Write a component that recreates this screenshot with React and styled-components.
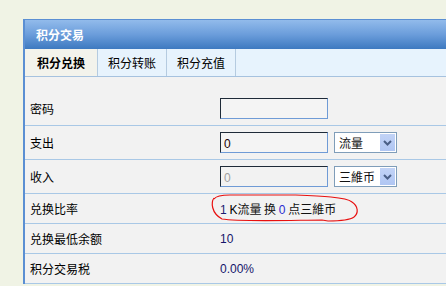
import React from "react";
import styled, { createGlobalStyle } from "styled-components";

const Global = createGlobalStyle`
  html, body { margin: 0; padding: 0; background: #f0f3e5; overflow: hidden; }
  body { font-family: "Noto Sans CJK SC", "Noto Sans", sans-serif; font-size: 12px; color: #000; }
`;

const Page = styled.div`
  padding: 19px 0 0 23px;
  width: 446px;
  height: 286px;
  box-sizing: border-box;
`;

const Panel = styled.div`
  width: 440px;
  border-left: 2px solid #5b8fd3;
  border-top: 1px solid #5b8fd3;
  background: #f2f2f2;
`;

const Header = styled.div`
  height: 29px;
  display: flex;
  align-items: center;
  padding-left: 11px;
  background: linear-gradient(#92bbeb, #6b9ddb 50%, #3d79c0);
  color: #fff;
  font-weight: bold;
  font-size: 12px;
`;

const Tabs = styled.div`
  display: flex;
  height: 27px;
  background: #e7f3fd;
  border-bottom: 1px solid #a6c2df;
`;

const Tab = styled.div`
  width: ${(p) => p.$w}px;
  display: flex;
  align-items: center;
  justify-content: center;
  box-sizing: border-box;
  border-right: 1px solid #b5cbe0;
  background: ${(p) => (p.$active ? "#f3f3ec" : "transparent")};
  font-weight: ${(p) => (p.$active ? "bold" : "normal")};
  font-size: 12px;
`;

const Body = styled.div`
  padding-top: 14px;
`;

const Row = styled.div`
  display: grid;
  grid-template-columns: 190px 1fr;
  align-items: center;
  height: ${(p) => p.$h}px;
  padding-left: 5px;
  border-bottom: 1px solid #a9c8e6;
  box-sizing: border-box;
`;

const Label = styled.div`
  font-size: 12px;
`;

const Value = styled.div`
  position: relative;
  display: flex;
  align-items: center;
  gap: 6px;
  font-size: 12px;
  color: #111;
`;

const Input = styled.input`
  width: 108px;
  height: 21px;
  box-sizing: border-box;
  margin: 0;
  padding: 2px 3px 0;
  font: 12px "Liberation Sans", Arial, sans-serif;
  color: ${(p) => (p.disabled ? "#a0a0a0" : "#200")};
  background: ${(p) => (p.disabled ? "#f2f2f2" : "#f4f4f4")};
  border-style: solid;
  border-width: 1px;
  border-color: #1e2a38 #6f9bd6 #6f9bd6 #1e2a38;
  outline: none;
`;

const Select = styled.div`
  width: 63px;
  height: 21px;
  box-sizing: border-box;
  border: 1px solid #7f9db9;
  background: #fff;
  display: flex;
  align-items: center;
  justify-content: space-between;
  padding: 1px 1px 1px 4px;
  font-size: 12px;
`;

const Arrow = styled.div`
  width: 15px;
  height: 17px;
  background: linear-gradient(#c2d3f6, #b0c6f3);
  display: flex;
  align-items: center;
  justify-content: center;
`;

const Num = styled.span`
  font-family: "Liberation Sans", Arial, sans-serif;
  color: ${(p) => p.$c || "#15156a"};
`;

const Mark = styled.svg`
  position: absolute;
  left: -10px;
  top: -6px;
  pointer-events: none;
`;

function Dropdown({ label }) {
  return (
    <Select>
      <span>{label}</span>
      <Arrow>
        <svg width="9" height="6" viewBox="0 0 9 6">
          <path d="M1 1 L4.5 4.5 L8 1" fill="none" stroke="#4a5f86" strokeWidth="2" />
        </svg>
      </Arrow>
    </Select>
  );
}

export default function App() {
  return (
    <>
      <Global />
      <Page>
        <Panel>
          <Header>积分交易</Header>
          <Tabs>
            <Tab $w={73} $active>积分兑换</Tab>
            <Tab $w={69}>积分转账</Tab>
            <Tab $w={69}>积分充值</Tab>
          </Tabs>
          <Body>
            <Row $h={35}>
              <Label>密码</Label>
              <Value><Input type="password" /></Value>
            </Row>
            <Row $h={34}>
              <Label>支出</Label>
              <Value>
                <Input defaultValue="0" />
                <Dropdown label="流量" />
              </Value>
            </Row>
            <Row $h={34}>
              <Label>收入</Label>
              <Value>
                <Input defaultValue="0" disabled />
                <Dropdown label="三維币" />
              </Value>
            </Row>
            <Row $h={30}>
              <Label>兑换比率</Label>
              <Value>
                <span>
                  <Num $c="#1a1a70">1</Num> <Num $c="#000">K</Num>流量 换 <Num $c="#2a2ad0">0</Num> 点三維币
                </span>
                <Mark width="150" height="30" viewBox="0 0 150 30">
                  <path
                    d="M4 4 C1 8, 1 19, 12 25 C30 28, 90 26, 112 26 L118 27 C128 27, 140 26, 144 23 C149 19, 148 12, 142 8 C136 3, 110 2, 85 1 L20 1 C12 1, 6 2, 4 5"
                    fill="none"
                    stroke="#e81010"
                    strokeWidth="1.2"
                  />
                </Mark>
              </Value>
            </Row>
            <Row $h={30}>
              <Label>兑换最低余额</Label>
              <Value><Num>10</Num></Value>
            </Row>
            <Row $h={30}>
              <Label>积分交易税</Label>
              <Value><Num>0.00%</Num></Value>
            </Row>
          </Body>
        </Panel>
      </Page>
    </>
  );
}
